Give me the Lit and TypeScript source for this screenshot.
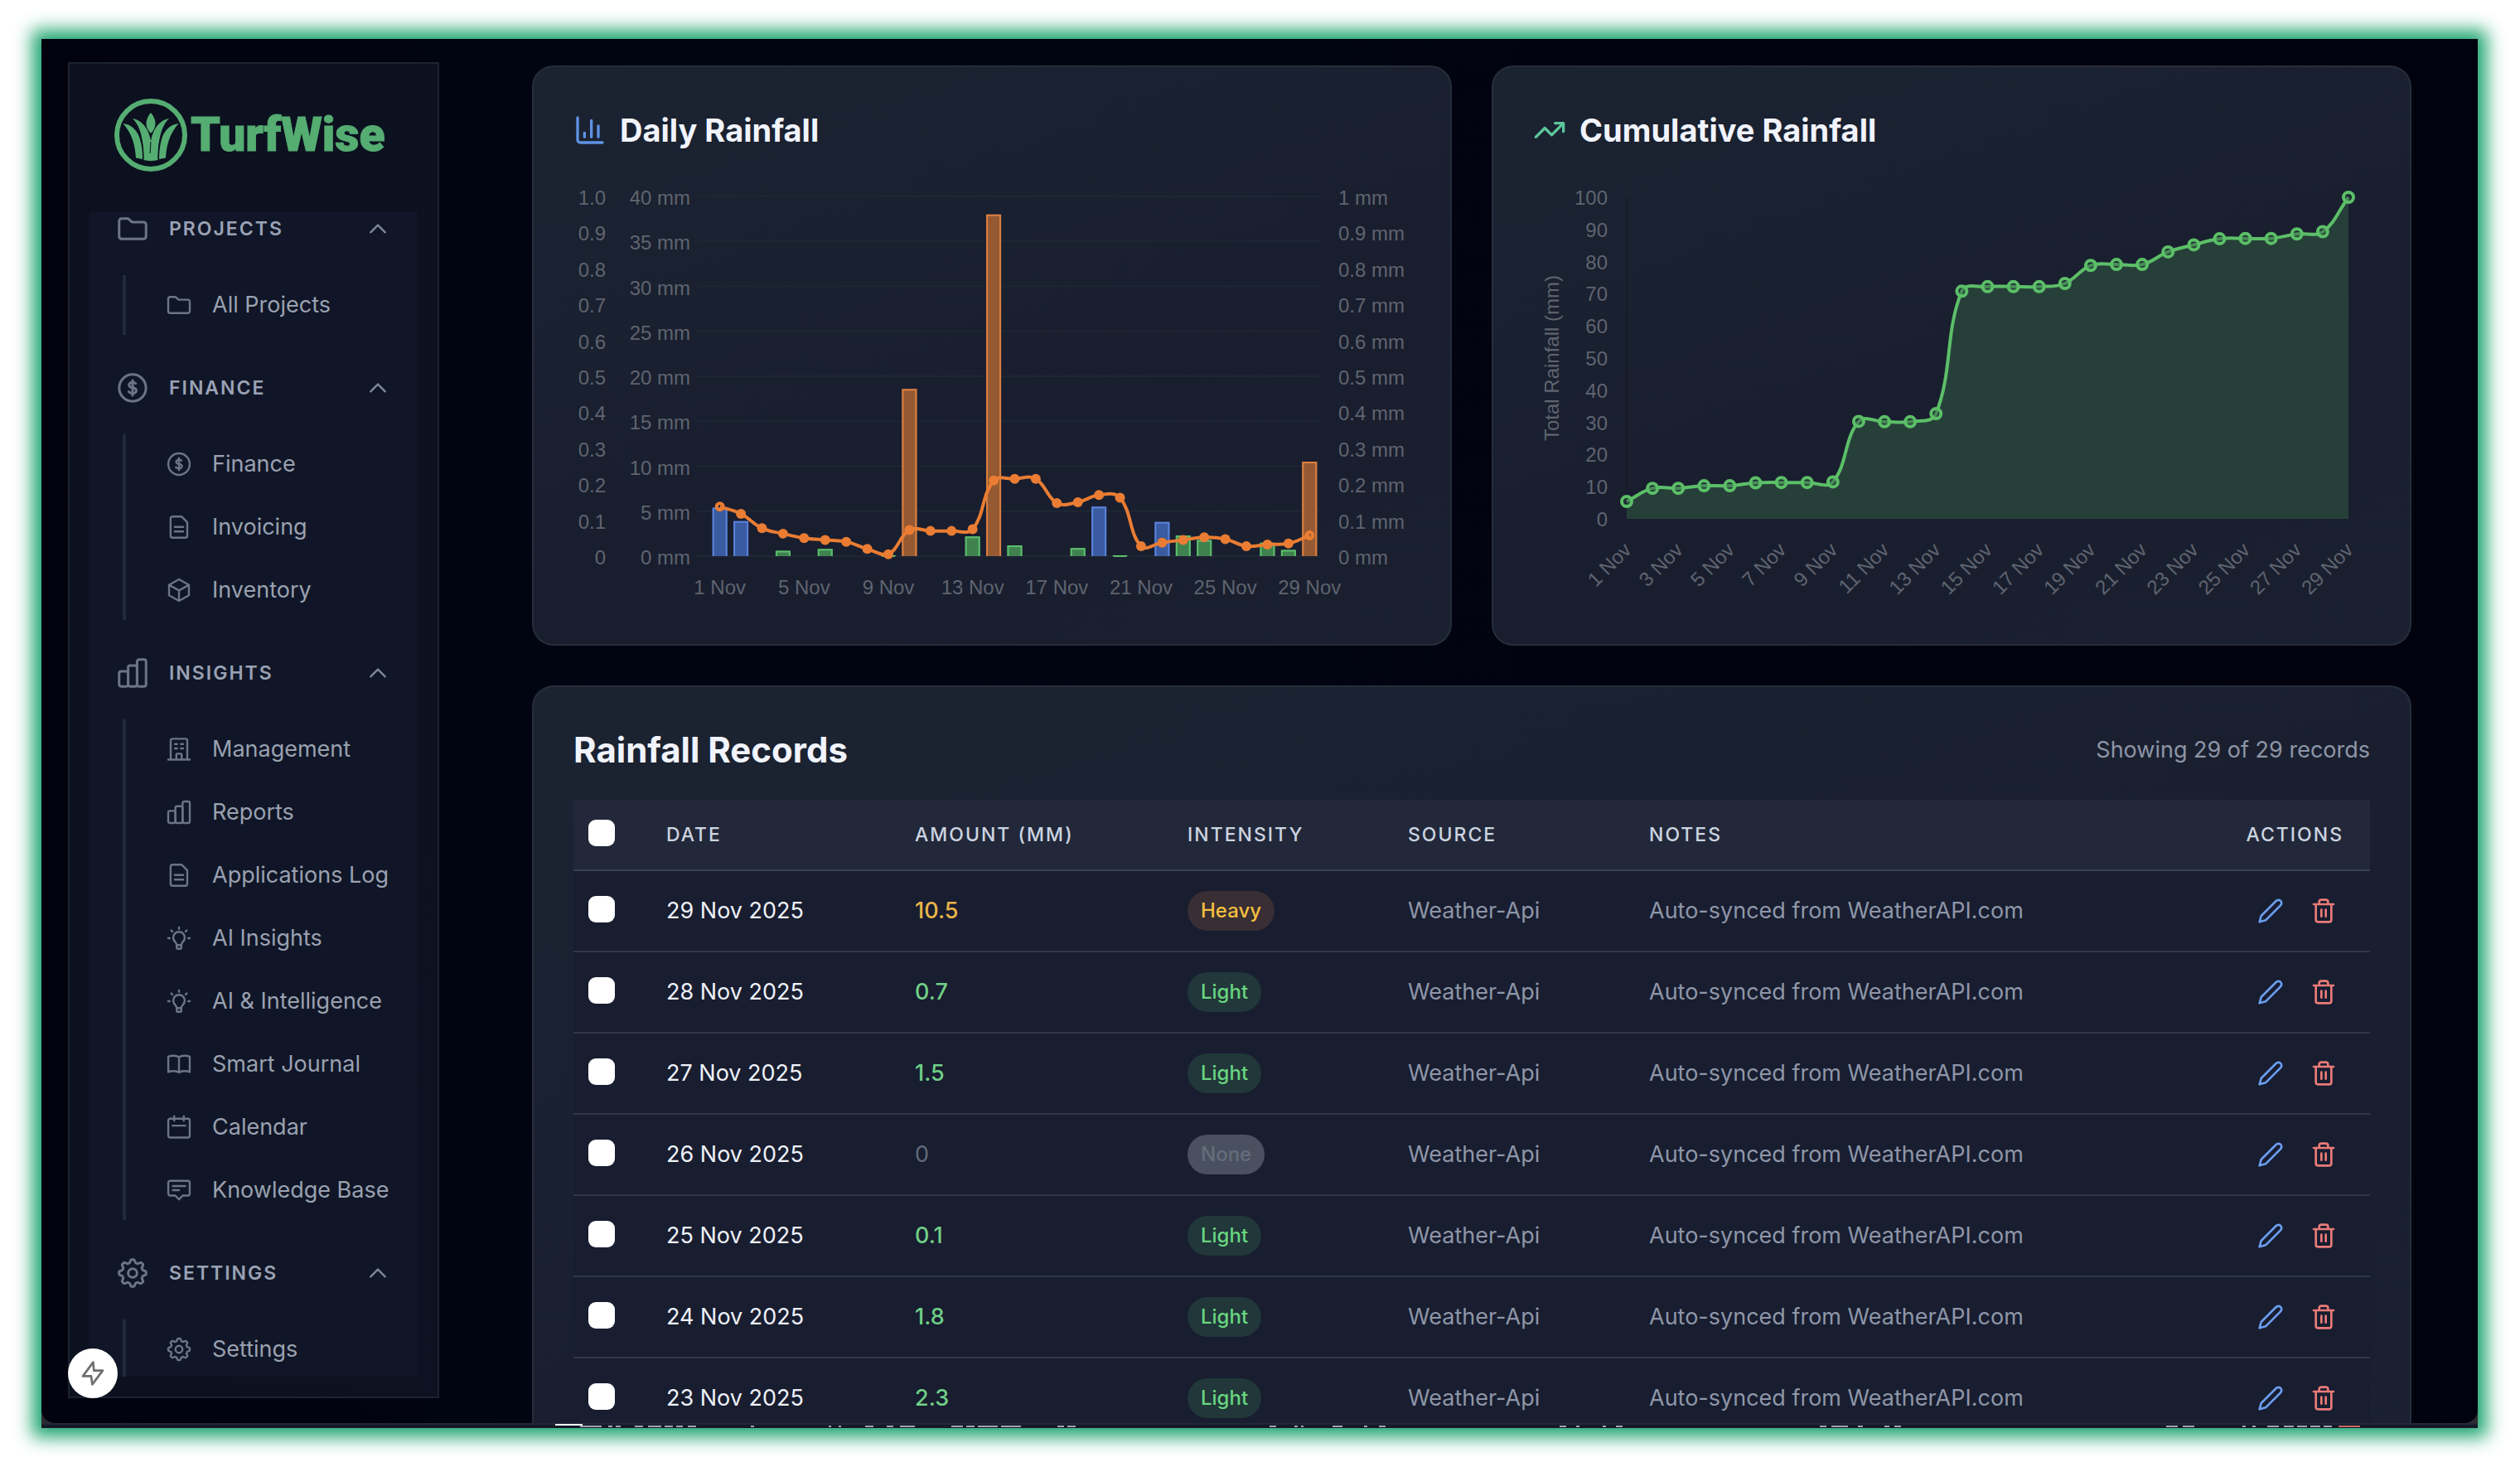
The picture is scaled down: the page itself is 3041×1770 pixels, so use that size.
import { LitElement, html, css, svg, nothing } from "lit";
import { customElement, property } from "lit/decorators.js";

/** Outline of an eight-toothed gear on the 24-unit icon grid. */
function gearPath(): string {
  const steps = 160;
  let d = "";
  for (let i = 0; i < steps; i++) {
    const a = (i / steps) * Math.PI * 2;
    const wave = Math.max(-1, Math.min(1, Math.cos(8 * a) * 1.5));
    const r = 8.7 + 1.1 * wave;
    const x = 12 + r * Math.sin(a);
    const y = 12 - r * Math.cos(a);
    d += `${i ? "L" : "M"}${x.toFixed(2)} ${y.toFixed(2)}`;
  }
  return d + "Z";
}

const GEAR = gearPath();

const ICONS: Record<string, unknown> = {
  folder: svg`<path d="M2.25 6.4a1.7 1.7 0 0 1 1.7-1.7h4.3c.5 0 .9.2 1.2.5l1.5 1.5c.3.3.7.5 1.2.5h7.9a1.7 1.7 0 0 1 1.7 1.7v8.7a1.7 1.7 0 0 1-1.7 1.7H3.95a1.7 1.7 0 0 1-1.7-1.7z"/>`,
  dollar: svg`<circle cx="12" cy="12" r="9.7"/><path d="M12 6.6v10.8m-2.8-2.6.8.6c1.1.8 2.9.8 3.9 0 1.1-.8 1.1-2.1 0-2.9-.5-.4-1.2-.6-1.9-.6s-1.3-.2-1.8-.6c-1-.8-1-2 0-2.8s2.6-.8 3.6 0l.4.3"/>`,
  document: svg`<path d="M6.1 2.4h8.2l5.2 5.2v12.3a1.7 1.7 0 0 1-1.7 1.7H6.1a1.7 1.7 0 0 1-1.7-1.7V4.1a1.7 1.7 0 0 1 1.7-1.7zM8.2 11.8h7.6M8.2 15.9h7.6"/>`,
  cube: svg`<path d="m21 7.3-9-5L3 7.3m18 0-9 5m9-5v9.4l-9 5-9-5V7.3m0 0 9 5m0 0v9.4"/>`,
  bars: svg`<rect x="2.25" y="10.8" width="6.5" height="10.9" rx="1.5"/><rect x="8.75" y="6.6" width="6.5" height="15.1" rx="1.5"/><rect x="15.25" y="2.3" width="6.5" height="19.4" rx="1.5"/>`,
  building: svg`<path d="M2.25 21.4h19.5M4.5 21.4V4a1.5 1.5 0 0 1 1.5-1.5h12A1.5 1.5 0 0 1 19.5 4v17.4M8.3 7.3h2M13.7 7.3h2M8.3 11.2h2M13.7 11.2h2M9.6 21.4v-4.6a.8.8 0 0 1 .8-.8h3.2a.8.8 0 0 1 .8.8v4.6"/>`,
  bulb: svg`<path d="M9.9 18.2c0-1.4-.7-2.1-1.4-3a5.2 5.2 0 1 1 7 0c-.7.9-1.4 1.6-1.4 3zM9.9 18.2v2.2a1.2 1.2 0 0 0 1.2 1.2h1.8a1.2 1.2 0 0 0 1.2-1.2v-2.2M12 2.2v1.4M5 4.9l1 1M19 4.9l-1 1M2.2 12h1.4M20.4 12h1.4"/>`,
  book: svg`<path d="M12 5.6C9.5 4 5.2 3.9 2.3 5.2v13.9c2.9-1.3 7.2-1.2 9.7.4 2.5-1.6 6.8-1.7 9.7-.4V5.2C18.8 3.9 14.5 4 12 5.6zm0 0v13.9"/>`,
  calendar: svg`<rect x="2.3" y="4.3" width="19.4" height="17.1" rx="1.7"/><path d="M7.7 2.1v4M16.3 2.1v4M6.3 10.6h11.4"/>`,
  chat: svg`<path d="M4 3.6h16a1.7 1.7 0 0 1 1.7 1.7v9.9a1.7 1.7 0 0 1-1.7 1.7h-4.6L12 20.4l-3.4-3.5H4a1.7 1.7 0 0 1-1.7-1.7V5.3A1.7 1.7 0 0 1 4 3.6zM6.4 8.2h11.2M6.4 12h5.6"/>`,
  gear: svg`<path d=${GEAR}/><circle cx="12" cy="12" r="3.2"/>`,
  chevron: svg`<path d="m4.5 15.7 7.5-7.5 7.5 7.5"/>`,
  column: svg`<path d="M3 3v16a2 2 0 0 0 2 2h16M18 17V9M13 17V5M8 17v-3"/>`,
  trend: svg`<path d="M22 7l-8.500 8.500-5-5L2 17M16 7h6v6"/>`,
  pencil: svg`<path d="M17 3a2.830 2.830 0 1 1 4 4L7.500 20.500 2 22l1.500-5.500z"/>`,
  trash: svg`<path d="M3 6h18M19 6v14a2 2 0 0 1-2 2H7a2 2 0 0 1-2-2V6M8 6V4a2 2 0 0 1 2-2h4a2 2 0 0 1 2 2v2M10 11v6M14 11v6"/>`,
  bolt: svg`<path d="M12.300 2 3 14.500h7.500L11.500 22 21 9.500h-8z"/>`,
};

@customElement("line-icon")
class LineIcon extends LitElement {
  @property() name = "";
  @property({ type: Number }) weight = 1.8;

  static styles = css`
    :host { display: block; flex: none; width: 32px; height: 32px; }
    svg { display: block; width: 100%; height: 100%; }
  `;

  render() {
    return html`<svg viewBox="0 0 24 24" fill="none" stroke="currentColor" stroke-width=${this.weight}
      stroke-linecap="round" stroke-linejoin="round" aria-hidden="true">${ICONS[this.name] ?? nothing}</svg>`;
  }
}

interface Group { title: string; icon: string; items: [string, string][] }

const GROUPS: Group[] = [
  { title: "PROJECTS", icon: "folder", items: [["All Projects", "folder"]] },
  { title: "FINANCE", icon: "dollar", items: [["Finance", "dollar"], ["Invoicing", "document"], ["Inventory", "cube"]] },
  {
    title: "INSIGHTS", icon: "bars", items: [
      ["Management", "building"], ["Reports", "bars"], ["Applications Log", "document"], ["AI Insights", "bulb"],
      ["AI & Intelligence", "bulb"], ["Smart Journal", "book"], ["Calendar", "calendar"], ["Knowledge Base", "chat"],
    ],
  },
  { title: "SETTINGS", icon: "gear", items: [["Settings", "gear"]] },
];

@customElement("side-bar")
class SideBar extends LitElement {
  static styles = css`
    :host { display: flex; flex-direction: column; box-sizing: border-box; padding: 24px; border: 2px solid #1c2230;
      background: linear-gradient(100deg, #0c101f, #0c1221); font-family: Inter, "Liberation Sans", sans-serif; }
    .logo { flex: none; display: flex; align-items: center; gap: 4px; height: 124px; padding-left: 30px; margin-bottom: 31px;
      color: #55ad72; text-decoration: none; font: 900 57px/64px Roboto, "Liberation Sans", sans-serif; -webkit-text-stroke: 1px #55ad72; }
    .mark { display: block; width: 88px; height: 88px; flex: none; }
    nav { flex: 1; min-height: 0; overflow: hidden; background: #101627; display: flex; flex-direction: column; gap: 28px; }
    .group { flex: none; }
    .group:first-child { margin-top: -16px; }
    .head { display: flex; align-items: center; gap: 24px; width: 100%; height: 72px; padding: 0 34px 0 32px; border: 0;
      background: none; color: #9aa2b4; font: 600 23px/32px Inter, sans-serif; letter-spacing: 2px; text-align: left; cursor: pointer; }
    .head span { flex: 1; }
    .head line-icon { width: 40px; height: 40px; color: #6c7488; }
    .head .chevron { width: 28px; height: 28px; color: #7f8799; }
    ul { list-style: none; margin: 20px 0 0 40px; padding: 0 0 0 16px; border-left: 4px solid #222938;
      display: flex; flex-direction: column; gap: 4px; }
    .item { display: flex; align-items: center; gap: 24px; height: 72px; padding-left: 32px; color: #9aa1b0;
      text-decoration: none; white-space: nowrap; font-size: 27px; line-height: 40px; }
    .item line-icon { color: #6c7488; }
  `;

  render() {
    return html`
      <a class="logo" href="#">
        <svg class="mark" viewBox="0 0 88 88" fill="currentColor" aria-hidden="true">
          <circle cx="44" cy="44" r="41" fill="none" stroke="currentColor" stroke-width="6"/>
          <path d="M44 17c4 5 5.500 9 5.500 13s-1.500 8-5.500 12c-4-4-5.500-8-5.500-12s1.500-8 5.500-13z"/>
          <path d="M10.500 30C20 31 28 38 31 49c2 7 3 15 3 24l-8-1.500C25 57 22 43 10.500 30z"/>
          <path d="M77.500 30C68 31 60 38 57 49c-2 7-3 15-3 24l8-1.500C63 57 66 43 77.500 30z"/>
          <path d="M22 24c11 2 19 11 22 27 3-16 11-25 22-27-12 12-13 32-13 50-6 1.500-12 1.500-18 0 0-18-1-38-13-50z"/>
          <path d="M35.200 73.500c0-9-.5-16-2.200-24M52.800 73.500c0-9 .5-16 2.200-24M43 66l1-14" fill="none" stroke="#0c1120" stroke-width="1"/>
        </svg>
        <span>TurfWise</span>
      </a>
      <nav aria-label="Main">
        ${GROUPS.map((g) => html`
          <div class="group">
            <button class="head" aria-expanded="true">
              <line-icon name=${g.icon}></line-icon><span>${g.title}</span>
              <line-icon class="chevron" name="chevron" weight="2"></line-icon>
            </button>
            <ul>${g.items.map(([label, icon]) => html`<li><a class="item" href="#"><line-icon name=${icon}></line-icon>${label}</a></li>`)}</ul>
          </div>`)}
      </nav>`;
  }
}

type Point = [number, number];

/** Smooth curve through the points, with control points kept inside the plot. */
function spline(pts: Point[], tension: number, top: number, bottom: number): string {
  const clamp = (v: number) => Math.max(top, Math.min(bottom, v));
  const ctrl = pts.map((p, i) => {
    const a = pts[Math.max(0, i - 1)];
    const b = pts[Math.min(pts.length - 1, i + 1)];
    const d01 = Math.hypot(p[0] - a[0], p[1] - a[1]);
    const d12 = Math.hypot(b[0] - p[0], b[1] - p[1]);
    const sum = d01 + d12 || 1;
    const fa = (tension * d01) / sum;
    const fb = (tension * d12) / sum;
    return {
      prev: [p[0] - fa * (b[0] - a[0]), clamp(p[1] - fa * (b[1] - a[1]))],
      next: [p[0] + fb * (b[0] - a[0]), clamp(p[1] + fb * (b[1] - a[1]))],
    };
  });
  let d = `M${pts[0][0]} ${pts[0][1]}`;
  for (let i = 1; i < pts.length; i++) {
    const n = ctrl[i - 1].next;
    const p = ctrl[i].prev;
    d += `C${n[0]} ${n[1]} ${p[0]} ${p[1]} ${pts[i][0]} ${pts[i][1]}`;
  }
  return d;
}

const chartStyles = css`
  :host { display: block; }
  svg { display: block; width: 100%; height: auto; overflow: visible; }
  text { font: 24px "Liberation Sans", Arial, sans-serif; fill: #5f646f; }
  .end { text-anchor: end; }
  .mid { text-anchor: middle; }
  .grid { stroke: #1f2634; stroke-width: 2; }
`;

const DAILY = [5.4, 3.9, 0, 0.6, 0, 0.8, 0, 0, 0.1, 18.6, 0, 0, 2.2, 38, 1.2, 0, 0, 0.9, 5.5, 0.1, 0, 3.8, 2.3, 1.8, 0, 0, 1.5, 0.7, 10.5];
const AVERAGE = [5.5, 4.7, 3.1, 2.5, 2, 1.8, 1.6, 0.8, 0.2, 2.9, 2.8, 2.8, 3, 8.4, 8.6, 8.6, 5.9, 6, 6.8, 6.5, 1.1, 1.5, 1.8, 2.1, 1.9, 1.1, 1.3, 1.4, 2.3];
const TOTAL = [5.4, 9.5, 9.5, 10.3, 10.3, 11.2, 11.3, 11.3, 11.5, 30.3, 30.2, 30.2, 32.7, 70.8, 72.2, 72.2, 72.2, 73.2, 78.8, 79.1, 79.1, 83, 85.2, 87.1, 87.2, 87.2, 88.6, 89.3, 100];

@customElement("daily-chart")
class DailyChart extends LitElement {
  static styles = [chartStyles, css`
    .body.light { fill: #3f8250; }
    .body.moderate { fill: #3a5b9f; }
    .body.heavy { fill: #965a33; }
    .edge { fill: none; stroke-width: 2; }
    .edge.light { stroke: #5cbf6c; }
    .edge.moderate { stroke: #5b82dd; }
    .edge.heavy { stroke: #dc8040; }
    .line { fill: none; stroke: #ea7d33; stroke-width: 4; }
    .dot { fill: #ea7d33; }
    .ring { fill: none; stroke: #ea7d33; stroke-width: 4; }
  `];

  render() {
    const left = 164, right = 901, top = 20, bottom = 454;
    const step = (right - left) / DAILY.length;
    const cx = (i: number) => left + step * (i + 0.5);
    const y = (v: number) => bottom - (v * (bottom - top)) / 40;
    const pts = AVERAGE.map((v, i): Point => [cx(i), y(v)]);
    const last = pts.length - 1;
    return html`<svg viewBox="0 0 1010 512" role="img" aria-label="Daily rainfall chart">
      ${[0, 5, 10, 15, 20, 25, 30, 35, 40].map((v) => svg`
        <line class="grid" x1=${left - 15} x2=${right} y1=${y(v)} y2=${y(v)}/>
        <text class="end" x="141" y=${y(v) + 10}>${v} mm</text>`)}
      ${Array.from({ length: 11 }, (_, k) => {
        const ty = y(k * 4) + 10;
        return svg`<text class="end" x="39" y=${ty}>${k === 0 ? "0" : (k / 10).toFixed(1)}</text>
          <text x="923" y=${ty}>${k === 0 ? "0" : k === 10 ? "1" : (k / 10).toFixed(1)} mm</text>`;
      })}
      ${DAILY.map((v, i) => {
        if (!v) return nothing;
        const kind = v >= 10 ? "heavy" : v >= 3 ? "moderate" : "light";
        const x0 = cx(i) - 9, x1 = cx(i) + 9, t = y(v);
        return svg`<path class="body ${kind}" d="M${x0} ${bottom}V${t}H${x1}V${bottom}z"/>
          <path class="edge ${kind}" d="M${x0 + 1} ${bottom}V${t + 1}H${x1 - 1}V${bottom}"/>`;
      })}
      <path class="line" d=${spline(pts, 0.4, top, bottom)}/>
      ${pts.map((p, i) => i === 0 || i === last
        ? svg`<circle class="ring" cx=${p[0]} cy=${p[1]} r="4"/>`
        : svg`<circle class="dot" cx=${p[0]} cy=${p[1]} r="6"/>`)}
      ${[0, 4, 8, 12, 16, 20, 24, 28].map((i) => svg`<text class="mid" x=${cx(i)} y="500">${i + 1} Nov</text>`)}
    </svg>`;
  }
}

@customElement("total-chart")
class TotalChart extends LitElement {
  static styles = [chartStyles, css`
    .area { fill: #264039; }
    .line { fill: none; stroke: #5cbf68; stroke-width: 4; }
    .ring { fill: #26403966; stroke: #5cbf68; stroke-width: 4; }
    .axis { stroke: #161b2a; stroke-width: 2; }
  `];

  render() {
    const left = 113, right = 984, top = 21, bottom = 409;
    const step = (right - left) / (TOTAL.length - 1);
    const y = (v: number) => bottom - (v * (bottom - top)) / 100;
    const pts = TOTAL.map((v, i): Point => [left + i * step, y(v)]);
    const d = spline(pts, 0.4, top, bottom);
    return html`<svg viewBox="0 0 1010 512" role="img" aria-label="Cumulative rainfall chart">
      <line class="axis" x1=${left} x2=${left} y1=${top} y2=${bottom}/>
      <path class="area" d="${d}V${bottom}H${left}z"/>
      <path class="line" d=${d}/>
      ${pts.map((p) => svg`<circle class="ring" cx=${p[0]} cy=${p[1]} r="6"/>`)}
      ${Array.from({ length: 11 }, (_, k) => svg`<text class="end" x="90" y=${y(k * 10) + 9}>${k * 10}</text>`)}
      <text class="mid" transform="translate(31 215) rotate(-90)">Total Rainfall (mm)</text>
      ${pts.map((p, i) => i % 2 ? nothing
        : svg`<text class="end" transform="translate(${p[0] + 7} 448) rotate(-45)">${i + 1} Nov</text>`)}
    </svg>`;
  }
}

const RECORDS: [string, string, string][] = [
  ["29 Nov 2025", "10.5", "Heavy"],
  ["28 Nov 2025", "0.7", "Light"],
  ["27 Nov 2025", "1.5", "Light"],
  ["26 Nov 2025", "0", "None"],
  ["25 Nov 2025", "0.1", "Light"],
  ["24 Nov 2025", "1.8", "Light"],
  ["23 Nov 2025", "2.3", "Light"],
];

@customElement("records-table")
class RecordsTable extends LitElement {
  static styles = css`
    :host { display: block; }
    table { width: 100%; table-layout: fixed; border-collapse: separate; border-spacing: 0; background: #181d30; }
    .pick { width: 80px; }
    .date { width: 300px; }
    .amount { width: 329px; }
    .intensity { width: 266px; }
    .source { width: 291px; }
    .actions { width: 200px; }
    th { box-sizing: border-box; height: 86px; padding: 0 32px; background: #222839; border-bottom: 2px solid #3a4152; text-align: left;
      color: #ccd4e0; font-size: 23px; font-weight: 500; line-height: 32px; letter-spacing: 2px; white-space: nowrap; }
    td { box-sizing: border-box; height: 98px; padding: 0 32px; border-bottom: 2px solid #313748; color: #8e96a7; font-size: 27px;
      line-height: 40px; white-space: nowrap; }
    th:first-child, td:first-child { padding: 0 0 4px 18px; }
    th:last-child { text-align: right; }
    input { display: block; appearance: none; width: 32px; height: 32px; margin: 0; border-radius: 9px; background: #fff; }
    .day { color: #eef1f8; }
    .rain { font-weight: 500; }
    .rain.Heavy { color: #e8b54a; }
    .rain.Light { color: #70cf86; }
    .rain.None { color: #626a7a; font-weight: 400; }
    .badge { display: inline-block; padding: 8px 16px; border-radius: 24px; font-size: 24px; font-weight: 500; line-height: 32px; vertical-align: middle; }
    .badge.Heavy { background: #382e33; color: #f5bf40; }
    .badge.Light { background: #213739; color: #68d580; }
    .badge.None { background: #4a5060; color: #656c7b; }
    .tools { display: flex; justify-content: flex-end; gap: 16px; }
    button { padding: 8px; border: 0; background: none; cursor: pointer; }
    .edit { color: #6b9eee; }
    .remove { color: #ea7b78; }
  `;

  render() {
    return html`<table>
      <thead><tr>
        <th class="pick"><input type="checkbox" aria-label="Select all records"></th>
        <th class="date">DATE</th><th class="amount">AMOUNT (MM)</th><th class="intensity">INTENSITY</th>
        <th class="source">SOURCE</th><th>NOTES</th><th class="actions">ACTIONS</th>
      </tr></thead>
      <tbody>${RECORDS.map(([day, mm, level]) => html`<tr>
        <td><input type="checkbox" aria-label="Select ${day}"></td>
        <td class="day">${day}</td>
        <td class="rain ${level}">${mm}</td>
        <td><span class="badge ${level}">${level}</span></td>
        <td>Weather-Api</td>
        <td>Auto-synced from WeatherAPI.com</td>
        <td><div class="tools">
          <button class="edit" aria-label="Edit ${day}"><line-icon name="pencil" weight="2"></line-icon></button>
          <button class="remove" aria-label="Delete ${day}"><line-icon name="trash" weight="2"></line-icon></button>
        </div></td>
      </tr>`)}</tbody>
    </table>`;
  }
}

/** Start and width of the light slivers along the lower edge of the window. */
const SLIVERS: [number, number][] = [
  [650, 26], [684, 5], [693, 6], [716, 10], [732, 16], [752, 10], [766, 8], [780, 10], [856, 4], [950, 3], [962, 3], [994, 10], [1020, 8],
  [1036, 18], [1098, 14], [1116, 10], [1130, 24], [1158, 24], [1226, 8], [1238, 10], [1482, 8], [1512, 4], [1520, 3], [1558, 12], [1596, 4], [1614, 8],
  [1832, 8], [1852, 4], [1884, 4], [1900, 8], [2146, 8], [2160, 20], [2192, 6], [2224, 6], [2236, 8], [2564, 14], [2584, 14], [2656, 4], [2668, 4],
  [2686, 14], [2706, 12], [2722, 12], [2738, 12], [2754, 10],
];

@customElement("app-root")
class AppRoot extends LitElement {
  static styles = css`
    :host { display: block; box-sizing: border-box; height: 100vh; padding: 47px 51px 47px 50px; background: #fff; overflow: hidden;
      font-family: Inter, "Liberation Sans", sans-serif; }
    .window { height: 100%; display: flex; flex-direction: column; background: #2c2c30; box-shadow: 0 0 20px 11px #1fa571; }
    .app { position: relative; flex: 1; min-height: 0; display: flex; overflow: hidden; border-radius: 0 0 16px 16px;
      background: linear-gradient(90deg, #01020e, #010512 25%, #01020e); }
    side-bar { flex: none; width: 448px; margin: 28px 0 30px 32px; }
    main { flex: 1; min-width: 0; padding: 32px 80px 0 112px; display: flex; flex-direction: column; gap: 48px; }
    .charts { flex: none; display: grid; grid-template-columns: 1fr 1fr; gap: 48px; }
    .card { box-sizing: border-box; padding: 48px; border: 2px solid #262d3b; border-radius: 26px;
      background: linear-gradient(160deg, #1b2331, #191e2f 60%, #1a202f); }
    .records { flex: none; }
    .title { display: flex; align-items: center; gap: 16px; height: 56px; margin-bottom: 32px; }
    .title line-icon { width: 40px; height: 40px; }
    .title .blue { color: #5f92e3; }
    .title .green { color: #5cc79a; }
    h2 { margin: 0; color: #f1f4fd; font-size: 38px; font-weight: 700; line-height: 56px; }
    .records h2 { flex: 1; font-size: 42px; }
    .count { color: #8d95a6; font-size: 27px; line-height: 40px; }
    .quick { position: absolute; left: 32px; bottom: 30px; width: 60px; height: 60px; padding: 14px; border: 0; border-radius: 50%;
      background: #fff; color: #6f6f6f; cursor: pointer; }
    .foot { flex: none; display: block; width: 100%; height: 6px; background: #141928; }
  `;

  render() {
    return html`<div class="window">
      <div class="app">
        <side-bar></side-bar>
        <main>
          <div class="charts">
            <section class="card">
              <div class="title"><line-icon class="blue" name="column" weight="2"></line-icon><h2>Daily Rainfall</h2></div>
              <daily-chart></daily-chart>
            </section>
            <section class="card">
              <div class="title"><line-icon class="green" name="trend" weight="2"></line-icon><h2>Cumulative Rainfall</h2></div>
              <total-chart></total-chart>
            </section>
          </div>
          <section class="card records">
            <div class="title"><h2>Rainfall Records</h2><span class="count">Showing 29 of 29 records</span></div>
            <records-table></records-table>
          </section>
        </main>
        <button class="quick" aria-label="Quick actions"><line-icon name="bolt" weight="2"></line-icon></button>
      </div>
      <svg class="foot" viewBox="0 0 2940 6" preserveAspectRatio="none" aria-hidden="true">
        <path d="M0 1h2940" stroke="#333848" stroke-width="1"/>
        <rect x="620" y="1" width="33" height="2" fill="#fff"/>
        ${SLIVERS.map(([x, w]) => svg`<rect x=${x} y="3" width=${w} height="2" fill="#9da3b0"/>`)}
        <path d="M2772 4h26" stroke="#c96a66" stroke-width="2"/>
      </svg>
    </div>`;
  }
}
